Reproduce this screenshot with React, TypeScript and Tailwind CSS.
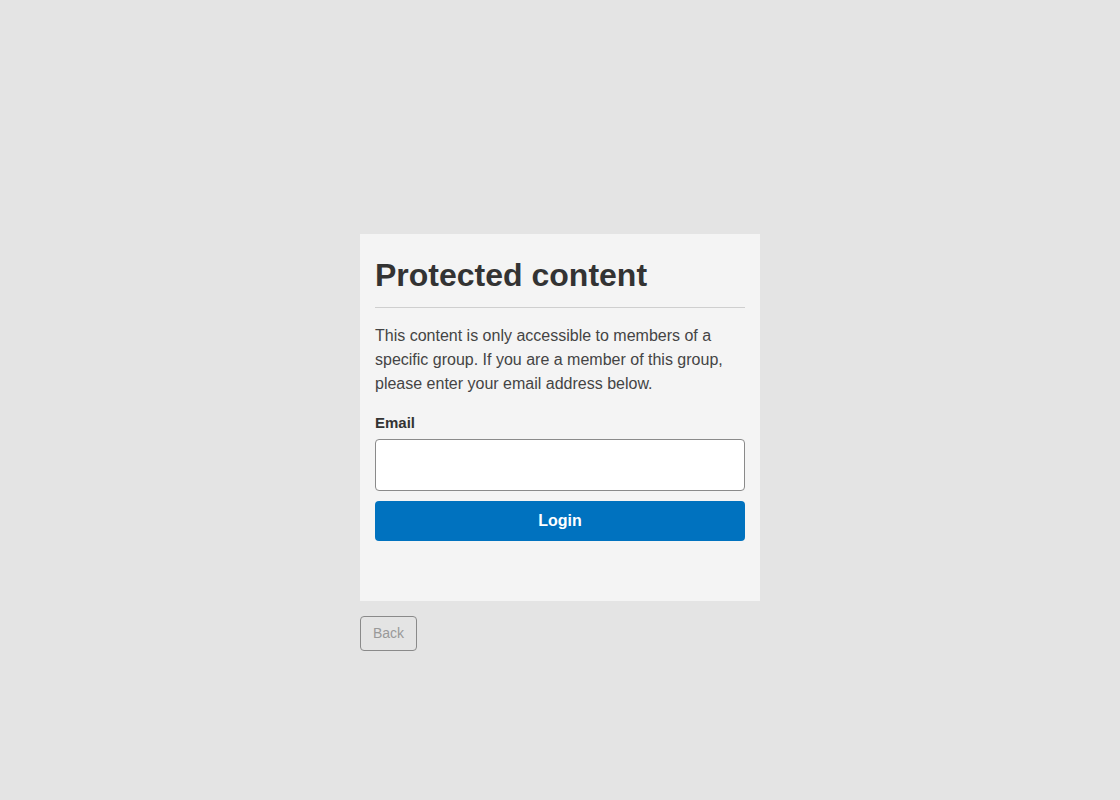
export default function App() {
  return (
    <div
      className="min-h-[800px] w-full bg-[#e4e4e4] pt-[234px]"
      style={{ fontFamily: '"Liberation Sans", Arial, sans-serif' }}
    >
      <div className="mx-auto w-[400px]">
        <div className="bg-[#f4f4f4] px-[15px] pt-[15px] pb-[60px]">
          <h1 className="mt-[7px] border-b border-[#cfcfcf] pb-[13px] text-[32px] leading-[38px] font-bold text-[#333]">
            Protected content
          </h1>
          <p className="mt-[16px] text-[16px] leading-[24px] text-[#444]">
            This content is only accessible to members of a specific group. If
            you are a member of this group, please enter your email address
            below.
          </p>
          <label className="mt-[17px] block text-[15px] leading-[20px] font-bold text-[#333]">
            Email
          </label>
          <input
            type="email"
            className="mt-[6px] block h-[52px] w-full rounded-[4px] border border-[#8a8a8a] bg-white px-3 text-[16px] outline-none"
          />
          <button className="mt-[10px] block h-[40px] w-full rounded-[4px] bg-[#0072bf] text-[16px] font-bold text-white">
            Login
          </button>
        </div>
        <button className="mt-[15px] h-[35px] w-[57px] rounded-[4px] border border-[#8a8a8a] text-[14px] text-[#999]">
          Back
        </button>
      </div>
    </div>
  );
}
